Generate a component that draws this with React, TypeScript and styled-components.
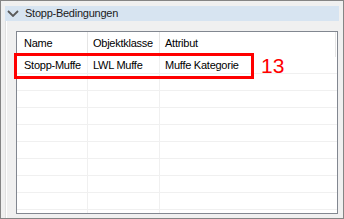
import React from "react";
import styled, { createGlobalStyle } from "styled-components";

const Global = createGlobalStyle`
  html, body { margin: 0; padding: 0; background: #f0f0f0; }
  body { font-family: "Liberation Sans", Arial, sans-serif; }
  * { box-sizing: border-box; }
`;

const Frame = styled.div`
  position: relative;
  width: 344px;
  height: 219px;
  border: 1px solid #858585;
  background: #f0f0f0;
  display: flex;
  flex-direction: column;
  font-family: "Liberation Sans", Arial, sans-serif;
  font-size: 11px;
  letter-spacing: -0.25px;
  color: #000;
`;

const SectionHeader = styled.div`
  margin: 5px 4px 0 4px;
  height: 15px;
  background: #d7e4f1;
  display: flex;
  align-items: center;
  line-height: 15px;
  color: #1b1b1b;
`;

const Chevron = styled.svg`
  margin-left: 2px;
  margin-right: 6px;
  flex: none;
`;

const Body = styled.div`
  flex: 1;
  margin-left: 4px;
  border-left: 1px solid #e0e0e0;
  box-shadow: inset 1px 0 0 #ffffff;
  padding: 10px 5px 4px 10px;
  display: flex;
`;

const Table = styled.div`
  flex: 1;
  border: 1px solid #828790;
  background: #ffffff;
  display: flex;
  flex-direction: column;
  overflow: hidden;
`;

const Columns = "71px 72px 1fr";

const HeaderRow = styled.div`
  display: grid;
  grid-template-columns: ${Columns};
  height: 25px;
  flex: none;
`;

const HeaderCell = styled.div<{ $pad: number; $last?: boolean }>`
  padding: 5px 0 0 ${(p) => p.$pad}px;
  line-height: 13px;
  border-right: 1px solid #e5e5e5;
  margin-right: ${(p) => (p.$last ? 1 : 0)}px;
  white-space: nowrap;
`;

const Row = styled.div<{ $fill?: boolean }>`
  display: grid;
  grid-template-columns: ${Columns};
  height: ${(p) => (p.$fill ? "auto" : "17px")};
  flex: ${(p) => (p.$fill ? 1 : "none")};
  border-bottom: ${(p) => (p.$fill ? "none" : "1px solid #f0f0f0")};
`;

const Cell = styled.div<{ $pad: number; $last?: boolean }>`
  padding-left: ${(p) => p.$pad}px;
  line-height: 16px;
  white-space: nowrap;
  border-right: ${(p) => (p.$last ? "none" : "1px solid #f0f0f0")};
`;

const Highlight = styled.div`
  position: absolute;
  left: 13px;
  top: 52px;
  width: 240px;
  height: 26px;
  border: 3px solid #ff0000;
  pointer-events: none;
`;

const Callout = styled.div`
  position: absolute;
  left: 260px;
  top: 54px;
  font-family: "Liberation Sans", Arial, sans-serif;
  font-size: 21px;
  line-height: 21px;
  letter-spacing: 0;
  color: #ff0000;
`;

const pads = [7, 5, 5];

const rows: string[][] = [
  ["Stopp-Muffe", "LWL Muffe", "Muffe Kategorie"],
  ["", "", ""],
  ["", "", ""],
  ["", "", ""],
  ["", "", ""],
  ["", "", ""],
  ["", "", ""],
  ["", "", ""],
  ["", "", ""],
];

export default function App() {
  const headers = ["Name", "Objektklasse", "Attribut"];
  return (
    <>
      <Global />
      <Frame>
        <SectionHeader>
          <Chevron width="12" height="7" viewBox="0 0 12 7">
            <polyline
              points="1,1 6,6 11,1"
              fill="none"
              stroke="#5a5a5a"
              strokeWidth="1.8"
            />
          </Chevron>
          <span>Stopp-Bedingungen</span>
        </SectionHeader>
        <Body>
          <Table>
            <HeaderRow>
              {headers.map((h, i) => (
                <HeaderCell key={h} $pad={pads[i]} $last={i === 2}>
                  {h}
                </HeaderCell>
              ))}
            </HeaderRow>
            {rows.map((r, ri) => (
              <Row key={ri}>
                {r.map((c, ci) => (
                  <Cell key={ci} $pad={pads[ci]} $last={ci === 2}>
                    {c}
                  </Cell>
                ))}
              </Row>
            ))}
            <Row $fill>
              <Cell $pad={0} />
              <Cell $pad={0} />
              <Cell $pad={0} $last />
            </Row>
          </Table>
        </Body>
        <Highlight />
        <Callout>13</Callout>
      </Frame>
    </>
  );
}
